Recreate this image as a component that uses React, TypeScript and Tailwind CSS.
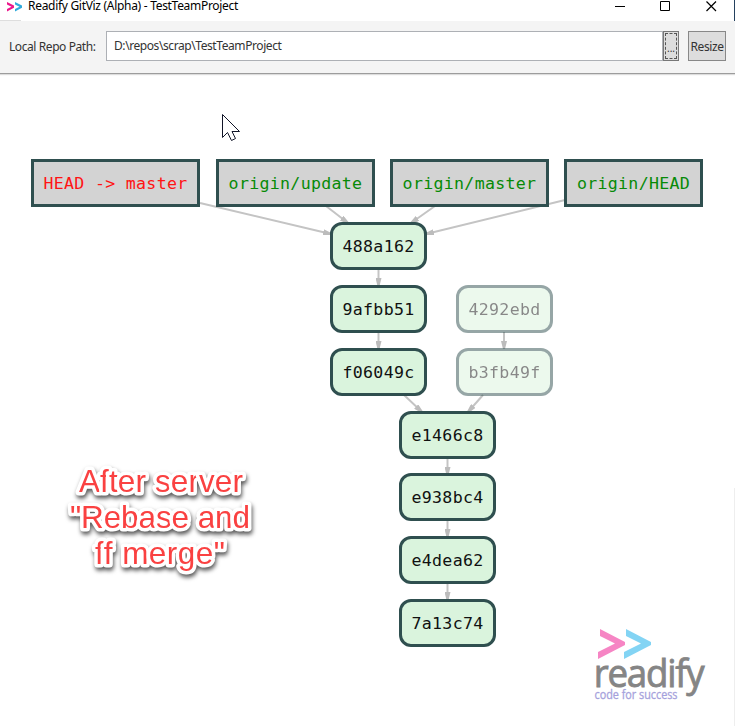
type GraphNode = { label: string; className: string };

const refs: GraphNode[] = [
  { label: 'HEAD -> master', className: 'left-[31px] top-[159px] w-[169px] text-[#ff1414]' },
  { label: 'origin/update', className: 'left-[216px] top-[159px] w-[159px] text-[#078a07]' },
  { label: 'origin/master', className: 'left-[390px] top-[159px] w-[159px] text-[#078a07]' },
  { label: 'origin/HEAD', className: 'left-[564px] top-[159px] w-[139px] text-[#078a07]' },
];

const commits: GraphNode[] = [
  { label: '488a162', className: 'left-[330px] top-[222px]' },
  { label: '9afbb51', className: 'left-[330px] top-[285px]' },
  { label: 'f06049c', className: 'left-[330px] top-[348px]' },
  { label: '4292ebd', className: 'left-[456px] top-[285px] opacity-50' },
  { label: 'b3fb49f', className: 'left-[456px] top-[348px] opacity-50' },
  { label: 'e1466c8', className: 'left-[399px] top-[411px]' },
  { label: 'e938bc4', className: 'left-[399px] top-[473px]' },
  { label: 'e4dea62', className: 'left-[399px] top-[536px]' },
  { label: '7a13c74', className: 'left-[399px] top-[599px]' },
];

const edges: [number, number, number, number][] = [
  [200, 203, 331, 234],
  [326, 206, 348, 223],
  [435, 206, 411, 223],
  [565, 200, 426, 234],
  [378.5, 269, 378.5, 286],
  [378.5, 332, 378.5, 349],
  [504, 332, 504, 349],
  [404, 395, 422, 412],
  [483, 395, 468, 412],
  [447.5, 458, 447.5, 475],
  [447.5, 521, 447.5, 537],
  [447.5, 583, 447.5, 600],
];

const mono = "font-['DejaVu_Sans_Mono',monospace] text-[16.6px] tracking-[0.3px] whitespace-pre";

function TitleBar() {
  return (
    <header className="relative flex h-[21px] shrink-0 items-start bg-white">
      <svg className="ml-[7px] mt-[2px] h-[10px] w-[16px] shrink-0" viewBox="0 0 16 10">
        <path d="M0 0 7 3.6V5.8L0 9.4V7L4.5 4.7 0 2.4Z" fill="#ec168b" />
        <path d="M8 0 15 3.6V5.8L8 9.4V7L12.5 4.7 8 2.4Z" fill="#30aadc" />
      </svg>
      <h1 className="ml-[5px] whitespace-nowrap text-[12px] leading-3 tracking-[-0.3px] text-black">
        Readify GitViz (Alpha) - TestTeamProject
      </h1>
      <svg className="ml-auto mr-[18px] h-[13px] w-[102px] shrink-0" viewBox="0 0 102 13" fill="none" stroke="#000">
        <path d="M0 6.5H10M45.5 1.5H54.5V10.5H45.5Z" />
        <path d="M91.5 1.5 101 11M101 1.5 91.5 11" strokeWidth="1.2" />
      </svg>
      <i className="absolute right-0 top-0 h-[21px] w-px bg-[#24415e]" />
      <i className="absolute bottom-0 left-0 h-px w-[21px] bg-[#dedede]" />
    </header>
  );
}

function Toolbar() {
  return (
    <div className="flex h-[53px] shrink-0 items-start border-b border-[#9c9c9c] bg-[#f4f4f4] pl-[9px] pt-[10px] text-[#333] shadow-[0_1px_1px_#dddddd]">
      <span className="mt-[6px] w-[97px] shrink-0 whitespace-nowrap text-[12px] leading-5 tracking-[-0.42px]">Local Repo Path:</span>
      <div className="flex h-[30px] w-[557px] shrink-0 items-center border border-[#adb0b5] bg-white pl-[7px] text-[12px] leading-5 tracking-[-0.42px]">
        D:\repos\scrap\TestTeamProject
      </div>
      <button className="flex h-[30px] w-[16px] shrink-0 border border-[#777] bg-[#ddd] p-px">
        <span className="flex h-full w-full items-center justify-center border border-dashed border-[#555] pt-1 text-[10px] leading-3">...</span>
      </button>
      <button className="ml-[9px] flex h-[30px] w-[38px] shrink-0 items-center justify-center border border-[#888] bg-[#ddd] pt-px text-[12px] tracking-[-0.4px]">Resize</button>
    </div>
  );
}

export default function App() {
  return (
    <div className="relative flex h-[726px] w-[735px] flex-col overflow-hidden bg-white font-['Noto_Sans',sans-serif]">
      <TitleBar />
      <Toolbar />
      <main className="flex-1">
        <svg className="absolute left-0 top-[74px]" width="735" height="652" viewBox="0 74 735 652">
          <defs>
            <marker id="arrow" viewBox="0 0 8 6" refX="8" refY="3" markerWidth="8" markerHeight="6" markerUnits="userSpaceOnUse" orient="auto">
              <path d="M0 0 8 2V4L0 6Z" fill="#bcbcbc" />
            </marker>
          </defs>
          {edges.map(([x1, y1, x2, y2]) => (
            <line key={`${x1}-${y1}`} x1={x1} y1={y1} x2={x2} y2={y2} stroke="#c4c4c4" strokeWidth="2" markerEnd="url(#arrow)" />
          ))}
        </svg>
        {refs.map((r) => (
          <div key={r.label} className={`absolute flex h-[48px] items-center justify-center border-3 border-[#2f4f4f] bg-[#d3d3d3] pt-[3px] ${mono} ${r.className}`}>
            {r.label}
          </div>
        ))}
        {commits.map((c) => (
          <div key={c.label} className={`absolute flex h-[48px] w-[97px] items-center justify-center rounded-[12px] border-3 border-[#2f4f4f] bg-[#daf4dd] pt-[3px] text-[#111] ${mono} ${c.className}`}>
            {c.label}
          </div>
        ))}
        <svg className="absolute left-[222px] top-[114px]" width="19" height="28" viewBox="0 0 19 28">
          <path d="M.5.5V23.5L5.5 18.5 9.5 26.5 13.5 24.5 10 17.5H17.5Z" fill="#fff" stroke="#111528" />
        </svg>
        <svg
          className="absolute left-[60px] top-[455px] font-['Liberation_Sans',Arial,sans-serif] drop-shadow-[1px_3px_2px_rgba(0,0,0,0.65)]"
          width="200"
          height="130"
          fontSize="31.5"
          fill="#fa4141"
          stroke="#fff"
          strokeWidth="7"
          strokeLinejoin="round"
          paintOrder="stroke"
        >
          <text x="19" y="37" textLength="164">After server</text>
          <text x="10" y="73" textLength="180">"Rebase and</text>
          <text x="35" y="109" textLength="130">ff merge"</text>
        </svg>
        <svg className="absolute left-[590px] top-[620px] font-['Open_Sans','Noto_Sans',sans-serif]" width="130" height="95">
          <path d="M10 9 35 22V25L8 39V32L25 23.5 10 16Z" fill="#f685c4" />
          <path d="M36 9 61 22V25L34 39V32L51 23.5 36 16Z" fill="#83d4f4" />
          <text x="4" y="67" transform="scale(.94 1)" fontSize="39" fill="#858585" stroke="#858585" strokeWidth=".9" textLength="118">readify</text>
          <text x="4.5" y="79" fontSize="12" fill="#a5a1dc" stroke="#a5a1dc" strokeWidth=".3" textLength="83" lengthAdjust="spacingAndGlyphs">code for success</text>
        </svg>
        <i className="absolute right-0 top-[488px] h-[238px] w-px bg-[#eeeeee]" />
      </main>
    </div>
  );
}
